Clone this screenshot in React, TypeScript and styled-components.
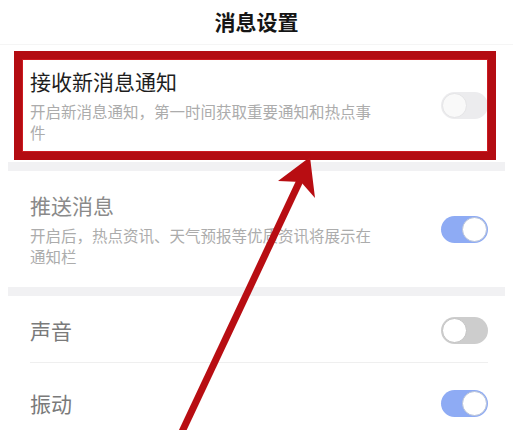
import React from "react";
import styled, { createGlobalStyle } from "styled-components";

const Global = createGlobalStyle`
  html, body { margin: 0; padding: 0; background: #ffffff; }
  body { font-family: "Noto Sans CJK SC", "Noto Sans", sans-serif; overflow: hidden; }
`;

const Page = styled.div`
  position: relative;
  width: 513px;
  height: 430px;
  overflow: hidden;
  background: #fff;
`;

const Header = styled.div`
  height: 45px;
  border-bottom: 1px solid #f5f5f5;
  display: flex;
  align-items: center;
  justify-content: center;
  font-size: 21px;
  font-weight: 700;
  color: #151515;
  padding-bottom: 2px;
  box-sizing: border-box;
`;

const Body = styled.div`
  margin: 0 8px;
  display: flex;
  flex-direction: column;
`;

const Section = styled.div<{ $pt: number; $pb: number }>`
  position: relative;
  display: flex;
  align-items: center;
  justify-content: space-between;
  padding: ${(p) => p.$pt}px 17px ${(p) => p.$pb}px 22px;
  background: #fff;
`;

const TextCol = styled.div`
  display: flex;
  flex-direction: column;
`;

const Title = styled.div<{ $color: string }>`
  font-size: 21px;
  line-height: 28px;
  color: ${(p) => p.$color};
`;

const Sub = styled.div`
  margin-top: 6px;
  font-size: 15.5px;
  line-height: 21px;
  color: #acacac;
  max-width: 348px;
`;

const Band = styled.div`
  height: 9px;
  background: #f1f1f3;
`;

const Row = styled.div<{ $h: number; $pt: number }>`
  height: ${(p) => p.$h}px;
  padding-top: ${(p) => p.$pt}px;
  box-sizing: border-box;
  display: flex;
  align-items: center;
  justify-content: space-between;
  padding-left: 22px;
  padding-right: 17px;
`;

const Divider = styled.div`
  height: 1px;
  background: #efefef;
  margin: 0 17px 0 22px;
`;

type Tone = "on" | "off" | "faint";

const Track = styled.div<{ $tone: Tone }>`
  flex-shrink: 0;
  width: 47px;
  height: 27px;
  border-radius: 14px;
  box-sizing: border-box;
  padding: 1px;
  display: flex;
  justify-content: ${(p) => (p.$tone === "on" ? "flex-end" : "flex-start")};
  background: ${(p) =>
    p.$tone === "on" ? "#8eabf4" : p.$tone === "off" ? "#cdcdcd" : "#ececee"};
`;

const Knob = styled.div<{ $tone: Tone }>`
  width: 25px;
  height: 25px;
  border-radius: 50%;
  box-sizing: border-box;
  background: ${(p) => (p.$tone === "faint" ? "#f9f9f9" : "#fff")};
  border: 1.5px solid
    ${(p) =>
      p.$tone === "on" ? "#b9c3d8" : p.$tone === "off" ? "#c2c2c2" : "#e4e4e6"};
`;

const Toggle = ({ tone }: { tone: Tone }) => (
  <Track $tone={tone}>
    <Knob $tone={tone} />
  </Track>
);

const Highlight = styled.div`
  position: absolute;
  left: 6px;
  top: 6px;
  right: 9px;
  bottom: 2px;
  border: 8px solid #b30c12;
  box-shadow: inset 0 0 0 1px #cc1a20;
  pointer-events: none;
`;

const Overlay = styled.svg`
  position: absolute;
  left: 0;
  top: 0;
  pointer-events: none;
`;

export default function App() {
  return (
    <Page>
      <Global />
      <Header>消息设置</Header>
      <Body>
        <Section $pt={22} $pb={19}>
          <TextCol>
            <Title $color="#1e1e1e">接收新消息通知</Title>
            <Sub>开启新消息通知，第一时间获取重要通知和热点事件</Sub>
          </TextCol>
          <Toggle tone="faint" />
          <Highlight />
        </Section>
        <Band />
        <Section $pt={20} $pb={20}>
          <TextCol>
            <Title $color="#8a8a8a">推送消息</Title>
            <Sub>开启后，热点资讯、天气预报等优质资讯将展示在通知栏</Sub>
          </TextCol>
          <Toggle tone="on" />
        </Section>
        <Band />
        <Row $h={66} $pt={2}>
          <Title $color="#7a7a7a">声音</Title>
          <Toggle tone="off" />
        </Row>
        <Divider />
        <Row $h={80} $pt={0}>
          <Title $color="#7a7a7a">振动</Title>
          <Toggle tone="on" />
        </Row>
      </Body>
      <Overlay width="513" height="430" viewBox="0 0 513 430">
        <line
          x1="180"
          y1="436"
          x2="304"
          y2="172"
          stroke="#b80d12"
          strokeWidth="7"
        />
        <polygon
          points="310,157 315,198 301,182 278,181"
          fill="#b80d12"
        />
      </Overlay>
    </Page>
  );
}
